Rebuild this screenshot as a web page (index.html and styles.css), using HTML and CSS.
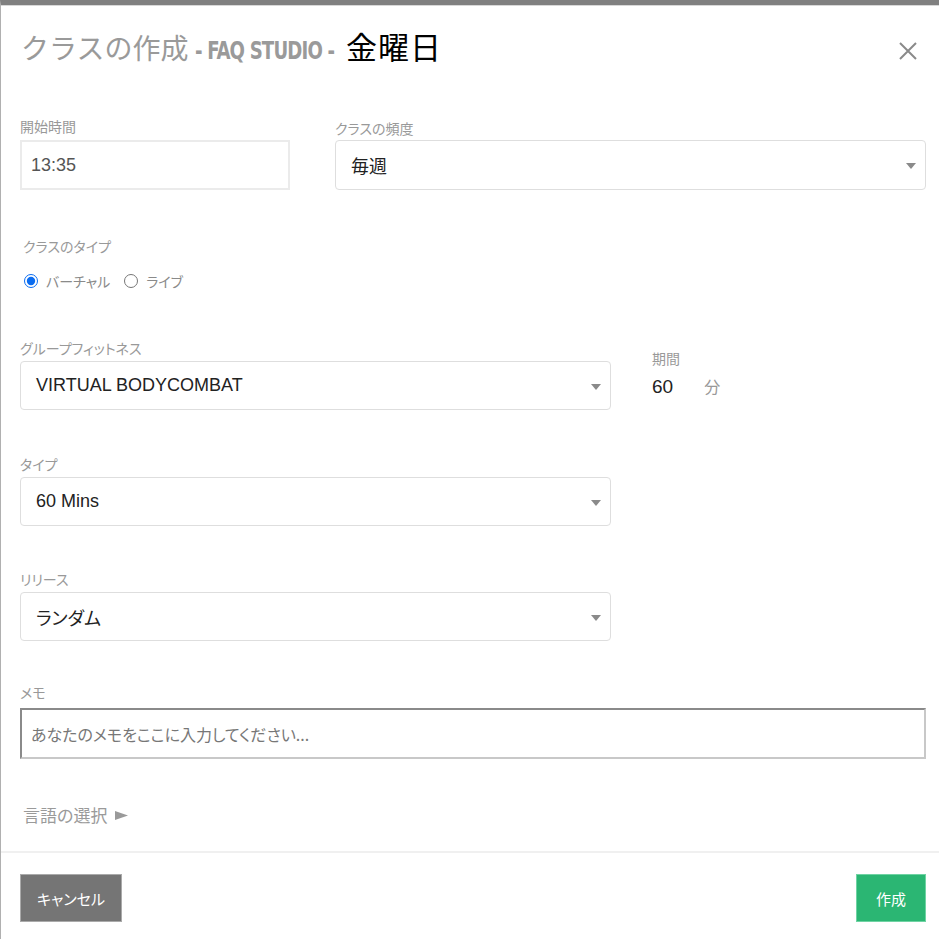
FILE: index.html
```html
<!DOCTYPE html>
<html lang="ja">
<head>
    <meta charset="UTF-8">
    <meta name="viewport" content="width=device-width, initial-scale=1.0">
    <title>クラスの作成</title>
    <link rel="stylesheet" href="styles.css">
</head>
<body>
    <div class="modal">
        <div class="modal-header">
            <h1 class="modal-title">
                <span class="title-main">クラスの作成</span>
                <span class="title-studio">- FAQ STUDIO -</span>
                <span class="title-day">金曜日</span>
            </h1>
            <button class="close-btn" type="button" aria-label="閉じる">
                <svg width="20" height="20" viewBox="0 0 20 20">
                    <path d="M2 2 L18 18 M18 2 L2 18" stroke="#8a8a8a" stroke-width="2" fill="none"/>
                </svg>
            </button>
        </div>

        <form class="modal-body">
            <div class="row-top">
                <div class="form-group">
                    <label for="start">開始時間</label>
                    <input type="text" id="start" class="plain-input" value="13:35">
                </div>
                <div class="form-group freq">
                    <label>クラスの頻度</label>
                    <div class="select-box">毎週</div>
                </div>
            </div>

            <div class="form-group type-group">
                <label>クラスのタイプ</label>
                <div class="radio-row">
                    <label class="radio"><input type="radio" name="ctype" checked> バーチャル</label>
                    <label class="radio"><input type="radio" name="ctype"> ライブ</label>
                </div>
            </div>

            <div class="row-program">
                <div class="form-group narrow">
                    <label>グループフィットネス</label>
                    <div class="select-box">VIRTUAL BODYCOMBAT</div>
                </div>
                <div class="duration">
                    <label>期間</label>
                    <div class="duration-value"><span class="num">60</span><span class="unit">分</span></div>
                </div>
            </div>

            <div class="form-group narrow">
                <label>タイプ</label>
                <div class="select-box">60 Mins</div>
            </div>

            <div class="form-group narrow release">
                <label>リリース</label>
                <div class="select-box">ランダム</div>
            </div>

            <div class="form-group memo">
                <label for="memo">メモ</label>
                <input type="text" id="memo" class="memo-input" placeholder="あなたのメモをここに入力してください...">
            </div>

            <div class="lang-select">
                言語の選択
                <svg class="arrow" width="13" height="9" viewBox="0 0 13 9"><path d="M0 0 L13 4.5 L0 9 Z" fill="#9a9a9a"/></svg>
            </div>
        </form>

        <div class="modal-footer">
            <button type="button" class="btn btn-cancel">キャンセル</button>
            <button type="button" class="btn btn-create">作成</button>
        </div>
    </div>
</body>
</html>
```

FILE: styles.css
```css
* {
    margin: 0;
    padding: 0;
    box-sizing: border-box;
    font-family: "Noto Sans CJK JP", sans-serif;
    font-feature-settings: "palt";
}

body {
    background-color: #fff;
}

.modal {
    width: 960px;
    min-height: 939px;
    border-top: 5px solid #808080;
    border-left: 1px solid #b0b0b0;
    background-color: #fff;
}

.modal-header {
    display: flex;
    align-items: center;
    justify-content: space-between;
    padding: 20px 0 0 20px;
    width: 938px;
    border-top: 1px solid #d8d8d8;
}

.modal-title {
    font-weight: 400;
    font-size: 28px;
    line-height: 40px;
    display: flex;
    align-items: baseline;
    gap: 7px;
}

.title-main {
    color: #9a9a9a;
    font-feature-settings: normal;
}

/* studio name in a narrow bold face */
.title-studio {
    display: inline-block;
    font-family: "DejaVu Sans", sans-serif;
    font-stretch: condensed;
    font-weight: 700;
    font-size: 24px;
    color: #9a9a9a;
    letter-spacing: -1px;
    transform: scaleX(0.84);
    transform-origin: left center;
    margin-right: -22px;
}

.title-day {
    color: #000;
    font-size: 31px;
    letter-spacing: 1px;
}

.close-btn {
    background: none;
    border: none;
    margin-right: 21px;
    margin-top: 4px;
    width: 20px;
    height: 20px;
    cursor: pointer;
}

.modal-body {
    width: 938px;
    padding: 45px 13px 24px 19px;
    display: flex;
    flex-direction: column;
}

label {
    display: block;
    font-size: 14px;
    line-height: 20px;
    color: #999;
    margin-bottom: 4px;
}

.row-top {
    display: flex;
    gap: 45px;
}

.row-top .form-group:first-child {
    width: 270px;
}

.freq {
    flex: 1;
    padding-top: 2px;
}

.freq label {
    margin-bottom: 2px;
}

.plain-input {
    width: 100%;
    height: 50px;
    border: 2px solid #ebebeb;
    padding: 0 9px;
    font-family: "Liberation Sans", sans-serif;
    font-size: 18px;
    color: #555;
    outline: none;
}

.select-box {
    position: relative;
    height: 49px;
    border: 1px solid #dedede;
    border-radius: 4px;
    padding: 0 15px;
    display: flex;
    align-items: center;
    font-family: "Liberation Sans", "Noto Sans CJK JP", sans-serif;
    font-size: 18px;
    color: #222;
}

.freq .select-box {
    height: 50px;
}

.select-box::after {
    content: "";
    position: absolute;
    right: 9px;
    top: 22px;
    border-left: 5px solid transparent;
    border-right: 5px solid transparent;
    border-top: 6px solid #8a8a8a;
}

.type-group {
    margin-top: 46px;
    padding-left: 3px;
}

.radio-row {
    display: flex;
    gap: 13px;
    margin-top: 15px;
}

.radio {
    display: flex;
    align-items: center;
    gap: 8px;
    margin: 0;
    font-size: 14px;
    color: #8a8a8a;
}

.radio input {
    width: 14px;
    height: 14px;
    margin: 0 0 0 1px;
    accent-color: #0a6cf0;
}

.row-program {
    display: flex;
    margin-top: 47px;
}

.narrow {
    width: 591px;
}

.row-program label {
    margin-bottom: 3px;
}

.duration {
    margin-left: 41px;
    padding-top: 10px;
}

.duration label {
    margin-bottom: 6px;
}

.duration-value {
    display: flex;
    align-items: baseline;
    gap: 31px;
}

.duration-value .num {
    font-family: "Liberation Sans", sans-serif;
    font-size: 19px;
    color: #222;
}

.duration-value .unit {
    font-size: 16px;
    color: #999;
}

.row-program + .narrow {
    margin-top: 44px;
}

.release {
    margin-top: 43px;
}

.form-group.narrow label {
    margin-bottom: 3px;
}

.memo {
    margin-top: 41px;
}

.memo label {
    margin-bottom: 6px;
}

.memo-input {
    width: 100%;
    height: 51px;
    border: 2px solid #c8c8c8;
    border-top-color: #8a8a8a;
    border-left-color: #8a8a8a;
    padding: 0 9px;
    font-size: 16px;
    color: #555;
    outline: none;
}

.memo-input::placeholder {
    color: #777;
}

.lang-select {
    margin-top: 44px;
    height: 24px;
    display: flex;
    align-items: center;
    gap: 8px;
    font-size: 17px;
    line-height: 24px;
    color: #9a9a9a;
    padding-left: 3px;
}

.lang-select .arrow {
    margin-top: 1px;
}

.modal-footer {
    width: 938px;
    border-top: 2px solid #f0f0f0;
    padding: 21px 13px 0 19px;
    display: flex;
    justify-content: space-between;
}

.btn {
    height: 48px;
    border: 1px solid #aaa;
    color: #fff;
    font-size: 15px;
    white-space: nowrap;
    padding: 0;
    cursor: pointer;
}

.btn-cancel {
    background-color: #757575;
    width: 102px;
}

.btn-create {
    background-color: #2bb673;
    border-color: #6fd3a3;
    width: 70px;
}
```
